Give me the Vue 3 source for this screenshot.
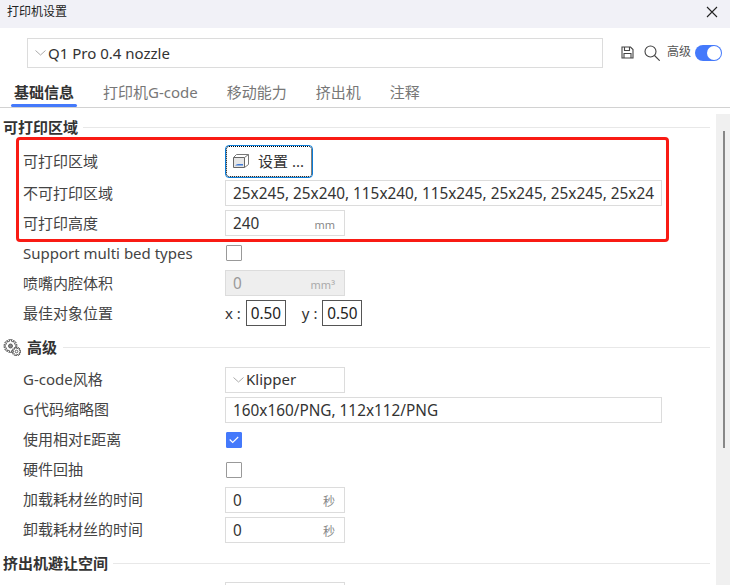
<script setup>
const rowsTop = [
  { label: 'Support multi bed types', type: 'check' },
  { label: '喷嘴内腔体积', type: 'num', value: '0', unit: 'mm³', disabled: true },
]
const advanced = [
  { label: 'G代码缩略图', type: 'wide', value: '160x160/PNG, 112x112/PNG' },
  { label: '使用相对E距离', type: 'check', checked: true },
  { label: '硬件回抽', type: 'check' },
  { label: '加载耗材丝的时间', type: 'num', value: '0', unit: '秒' },
  { label: '卸载耗材丝的时间', type: 'num', value: '0', unit: '秒' },
]
const tabs = ['基础信息', '打印机G-code', '移动能力', '挤出机', '注释']
const teeth = (cx, cy, r, n) => {
  let d = ''
  for (let i = 0; i < n; i++) {
    const a = (i / n) * Math.PI * 2
    const b = a + Math.PI / n
    const p = (t, q) => `${(cx + Math.cos(t) * q).toFixed(1)} ${(cy + Math.sin(t) * q).toFixed(1)}`
    d += `${i ? 'L' : 'M'}${p(a - 0.28, r)}L${p(a + 0.28, r)}L${p(b - 0.28, r * 0.76)}L${p(b + 0.28, r * 0.76)}`
  }
  return d + 'Z'
}
const bigGear = teeth(7.5, 7, 6.6, 8)
const smallGear = teeth(13.5, 12.5, 4.4, 7)
</script>

<template>
  <div class="win">
    <header class="title">
      <span>打印机设置</span>
      <svg class="close" width="12" height="12" viewBox="0 0 12 12"><path d="M1 1l10 10M11 1L1 11" stroke="#222" stroke-width="1.1" fill="none"/></svg>
    </header>

    <div class="preset">
      <div class="combo big">
        <svg class="chev" width="11" height="6" viewBox="0 0 11 6"><path d="M.5.5l5 4.5 5-4.5" stroke="#aaa" fill="none"/></svg>
        <span>Q1 Pro 0.4 nozzle</span>
      </div>
      <svg class="tool save" width="13" height="13" viewBox="0 0 13 13" fill="none" stroke="#444" stroke-width="1.1"><path d="M1 1h8.500l2.500 2.500v8.500h-11z"/><path d="M3.500 1v3.500h5V1M3 12V7.500h7V12"/></svg>
      <svg class="tool glass" width="16" height="16" viewBox="0 0 16 16" fill="none" stroke="#444" stroke-width="1.1"><circle cx="6.500" cy="6.500" r="5.500"/><path d="M10.500 10.500l5.200 5.200"/></svg>
      <span class="adv">高级</span>
      <span class="switch"><i></i></span>
    </div>

    <nav class="tabs">
      <span v-for="(t, i) in tabs" :key="t" class="tab" :class="{ on: i === 0 }">{{ t }}</span>
    </nav>

    <div class="body">
      <main class="content">
        <h3 class="sec first"><b>可打印区域</b></h3>
        <div class="row r-btn">
          <label>可打印区域</label>
          <button class="btn">
            <svg width="16" height="14" viewBox="0 0 16 14" fill="none"><path d="M.5 3.500h11v10H.500z" fill="#e6e6e6" stroke="#666"/><path d="M.5 3.500l3-3h12v10l-4 3M11.500 3.500l4-3" stroke="#777"/><path d="M2 11.500h8V10H5l-1.500.5z" fill="#3f7bd8"/></svg>
            <span>设置 ...</span>
          </button>
        </div>
        <div class="row">
          <label>不可打印区域</label>
          <div class="field wide">25x245, 25x240, 115x240, 115x245, 25x245, 25x245, 25x24</div>
        </div>
        <div class="row">
          <label>可打印高度</label>
          <div class="field num"><span>240</span><em>mm</em></div>
        </div>
        <div v-for="r in rowsTop" :key="r.label" class="row">
          <label>{{ r.label }}</label>
          <span v-if="r.type === 'check'" class="check"></span>
          <div v-else class="field num off"><span>{{ r.value }}</span><em>{{ r.unit }}</em></div>
        </div>
        <div class="row">
          <label>最佳对象位置</label>
          <div class="xy">
            <span class="axis">x :</span><span class="mini">0.50</span>
            <span class="axis y">y :</span><span class="mini">0.50</span>
          </div>
        </div>

        <h3 class="sec adv-sec">
          <svg class="gear" width="18" height="17" viewBox="0 0 18 17" fill="none" stroke="#555" stroke-width=".9">
            <path :d="bigGear"/><circle cx="7.500" cy="7" r="2" fill="#888"/>
            <path :d="smallGear" fill="#fff"/><circle cx="13.500" cy="12.500" r="1.300"/>
          </svg>
          <b>高级</b>
        </h3>
        <div class="lower">
          <div class="row">
            <label>G-code风格</label>
            <div class="combo small">
              <svg class="chev" width="11" height="6" viewBox="0 0 11 6"><path d="M.5.5l5 4.500 5-4.500" stroke="#aaa" fill="none"/></svg>
              <span>Klipper</span>
            </div>
          </div>
          <div v-for="r in advanced" :key="r.label" class="row">
            <label>{{ r.label }}</label>
            <div v-if="r.type === 'wide'" class="field wide">{{ r.value }}</div>
            <span v-else-if="r.type === 'check'" class="check" :class="{ checked: r.checked }">
              <svg v-if="r.checked" width="10" height="8" viewBox="0 0 10 8"><path d="M.7 3.500l3 3 5.500-5.500" stroke="#fff" stroke-width="1.100" fill="none"/></svg>
            </span>
            <div v-else class="field num"><span>{{ r.value }}</span><em class="cjk">{{ r.unit }}</em></div>
          </div>
        </div>

        <h3 class="sec ext-sec"><b>挤出机避让空间</b></h3>
        <div class="row"><label></label><div class="field num"></div></div>
      </main>
      <aside class="track"><i></i></aside>
    </div>

    <div class="redbox"></div>
  </div>
</template>

<style>
html, body { margin: 0; height: 100%; overflow: hidden; background: #fff; }
</style>

<style scoped>
.win { position: relative; width: 730px; height: 585px; overflow: hidden; background: #fff; color: #333; font: 15px/20px "Noto Sans", "Noto Sans CJK SC", sans-serif; }
.title { height: 28px; background: #f1f1f7; display: flex; align-items: center; justify-content: space-between; padding: 0 12px 4px 7px; box-sizing: border-box; font-size: 12px; color: #222; }
.preset { height: 29px; margin-top: 10px; padding: 0 8px 0 27px; display: flex; align-items: center; }
.combo { border: 1px solid #dcdcdc; box-sizing: border-box; display: flex; align-items: center; }
.big { width: 576px; height: 30px; padding-left: 7px; color: #333; }
.chev { margin-right: 2px; flex: none; }
.small { width: 120px; height: 26px; padding-left: 7px; }
.small span { margin-top: -2px; }
.tool { flex: none; }
.save { margin-left: 18px; }
.glass { margin-left: 10px; }
.adv { margin-left: 7px; font-size: 12px; color: #555; margin-top: -2px; }
.switch { margin-left: 4px; width: 27px; height: 16px; border-radius: 8px; background: #4479fb; position: relative; }
.switch i { position: absolute; right: 1px; top: 1px; width: 14px; height: 14px; background: #fff; border-radius: 50%; }
.tabs { height: 41px; border-bottom: 1px solid #d2d2d2; display: flex; padding-left: 14px; gap: 29px; box-sizing: border-box; align-items: center; color: #777; }
.tab { position: relative; line-height: 20px; top: 5px; white-space: nowrap; }
.tab.on { color: #333; font-weight: 700; }
.tab.on::after { content: ""; position: absolute; left: -3px; right: -3px; top: 22px; height: 3px; border-radius: 2px; background: #4479fb; }
.body { display: flex; height: 478px; }
.content { width: 710px; flex: none; overflow: hidden; }
.track { margin: 6px 0 0 6px; width: 14px; background: #f0f0f0; position: relative; }
.track i { position: absolute; left: 7px; top: 17px; width: 2px; height: 317px; background: #888; }
.sec { margin: 0; height: 20px; display: flex; align-items: center; gap: 5px; font-size: 15px; font-weight: 400; color: #333; padding-left: 3px; }
.sec b { font-weight: 700; }
.sec::after { content: ""; flex: 1; height: 1px; background: #e8e8e8; }
.first { margin-top: 9px; }
.adv-sec { margin-top: 9px; margin-bottom: 8px; gap: 6px; }
.ext-sec { margin-top: 8px; margin-bottom: 7px; }
.gear { flex: none; }
.row { height: 30px; display: flex; align-items: center; padding-left: 23px; }
.row label { width: 202px; flex: none; color: #444; white-space: nowrap; }
.lower label { margin-top: -2px; }
.r-btn { height: 34px; margin-top: 7px; }
.btn { width: 86px; height: 31px; box-sizing: border-box; margin-left: 1px; background: #fff; border: 1px dotted #000; outline: 1px solid #0a7bd6; border-radius: 3px; display: flex; align-items: center; padding: 0 0 0 6px; gap: 9px; font: inherit; color: #333; white-space: nowrap; }
.field { height: 26px; box-sizing: border-box; border: 1px solid #dcdcdc; display: flex; align-items: center; padding-left: 7px; color: #333; background: #fff; white-space: nowrap; overflow: hidden; font-size: 15.33px; }
.wide { width: 437px; }
.num { width: 120px; justify-content: space-between; padding-right: 9px; }
.num em { font-style: normal; font-size: 11px; color: #888; margin-top: 4px; }
.num em.cjk { font-size: 12px; }
.off { background: #eee; color: #999; }
.off em { color: #aaa; }
.check { width: 16px; height: 16px; box-sizing: border-box; border: 1px solid #999; border-radius: 1px; display: flex; align-items: center; justify-content: center; margin-left: 1px; }
.checked { background: #4479fb; border-color: #4479fb; }
.xy { display: flex; align-items: center; }
.axis { margin-right: 5px; }
.axis.y { margin-left: 16px; }
.mini { width: 40px; height: 26px; box-sizing: border-box; border: 1px solid #555; display: flex; align-items: center; justify-content: center; color: #222; font-size: 15.33px; }
.redbox { position: absolute; left: 16px; top: 137px; width: 653px; height: 105px; box-sizing: border-box; border: 3px solid #f91b14; border-radius: 4px; }
</style>
